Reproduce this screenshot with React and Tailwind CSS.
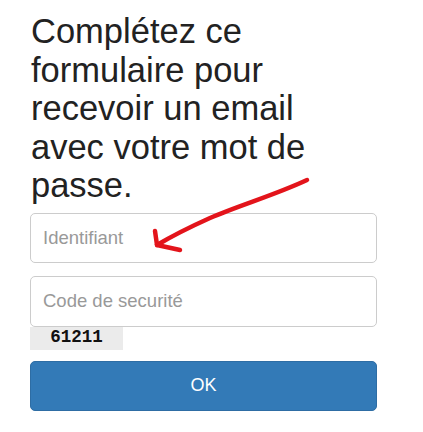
import React from 'react';

function Arrow() {
  return (
    <svg className="absolute left-0 top-0 pointer-events-none" width="423" height="432" viewBox="0 0 423 432">
      <g fill="none" stroke="#e3141b" strokeWidth="4.5" strokeLinecap="round" strokeLinejoin="round">
        <path d="M307 180 C 275 195, 240 205, 210 218 C 190 227, 172 236, 157 245" />
        <path d="M155 231 L157 245 L180 250" />
      </g>
    </svg>
  );
}

export default function App() {
  return (
    <div className="relative w-[423px] h-[432px] bg-white font-['Liberation_Sans',Arial,sans-serif] overflow-hidden">
      <div className="pl-[31px] pr-[20px] pt-[12px]">
        <h1 className="text-[34.5px] leading-[38.5px] text-[#222] font-normal w-[340px]">
          Complétez ce formulaire pour recevoir un email avec votre mot de passe.
        </h1>
      </div>
      <form className="pl-[30px] w-[377px] mt-[8px] flex flex-col" onSubmit={(e) => e.preventDefault()}>
        <input
          type="text"
          placeholder="Identifiant"
          className="h-[50px] w-full rounded-[5px] border border-[#ccc] px-[12px] text-[18.5px] text-[#555] placeholder:text-[#999] outline-none"
        />
        <input
          type="text"
          placeholder="Code de securité"
          className="mt-[13px] h-[51px] w-full rounded-[5px] border border-[#ccc] px-[12px] text-[18.5px] text-[#555] placeholder:text-[#999] outline-none"
        />
        <div className="w-[93px] h-[23px] bg-[#ebebeb] flex items-center justify-center font-['Liberation_Mono',monospace] font-bold text-[17.5px] leading-none text-[#111]">
          61211
        </div>
        <button
          type="submit"
          className="mt-[11px] h-[50px] w-full rounded-[5px] bg-[#337ab7] border border-[#2e6da4] text-white text-[18px]"
        >
          OK
        </button>
      </form>
      <Arrow />
    </div>
  );
}
